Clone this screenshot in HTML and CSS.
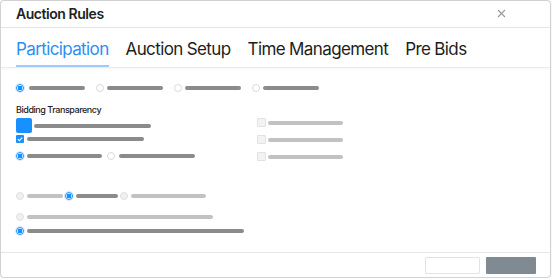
FILE: index.html
```html
<!DOCTYPE html>
<html>
<head>
<meta charset="utf-8">
<link rel="stylesheet" href="styles.css">
</head>
<body>
<div class="dialog">
  <div class="header">
    <span class="title">Auction Rules</span>
    <svg class="close" width="9" height="9" viewBox="0 0 9 9"><path d="M1 1L8 8M8 1L1 8" stroke="#9a9a9a" stroke-width="1.1" fill="none"/></svg>
  </div>
  <div class="tabs">
    <div class="tab active">Participation</div>
    <div class="tab">Auction Setup</div>
    <div class="tab">Time Management</div>
    <div class="tab">Pre Bids</div>
  </div>
  <div class="content">
    <div class="row r1">
      <span class="radio on first"></span><span class="bar dark" style="width:56px"></span>
      <span class="radio"></span><span class="bar dark" style="width:56px"></span>
      <span class="radio"></span><span class="bar dark" style="width:56px"></span>
      <span class="radio"></span><span class="bar dark" style="width:56px"></span>
    </div>
    <div class="label">Bidding Transparency</div>
    <div class="grid">
      <div class="col-left">
        <div class="row ra"><span class="square"></span><span class="bar dark" style="width:117px"></span></div>
        <div class="row rb"><span class="check on"><svg width="8" height="8" viewBox="0 0 8 8"><path d="M1.8 4.1L3.4 5.6L6.3 2.6" stroke="#fff" stroke-width="1.2" fill="none"/></svg></span><span class="bar dark" style="width:117px"></span></div>
        <div class="row rc">
          <span class="radio on"></span><span class="bar dark" style="width:75px"></span>
          <span class="radio sp"></span><span class="bar dark" style="width:76px"></span>
        </div>
      </div>
      <div class="col-right">
        <div class="row rr"><span class="check dis"></span><span class="bar light" style="width:75px"></span></div>
        <div class="row rr"><span class="check dis"></span><span class="bar light" style="width:75px"></span></div>
        <div class="row rr"><span class="check dis"></span><span class="bar light" style="width:75px"></span></div>
      </div>
    </div>
    <div class="row r3">
      <span class="radio dis"></span><span class="bar light" style="width:36px"></span>
      <span class="radio on"></span><span class="bar dark" style="width:42px"></span>
      <span class="radio dis"></span><span class="bar light" style="width:75px"></span>
    </div>
    <div class="row r4">
      <span class="radio dis"></span><span class="bar light" style="width:186px"></span>
    </div>
    <div class="row r5">
      <span class="radio on"></span><span class="bar dark" style="width:217px"></span>
    </div>
  </div>
  <div class="footer">
    <span class="btn cancel"></span>
    <span class="btn ok"></span>
  </div>
</div>
</body>
</html>
```

FILE: styles.css
```css
html, body {
  margin: 0;
  padding: 0;
  background: #fff;
}
body {
  font-family: Inter, "Noto Sans", sans-serif;
}
.dialog {
  width: 549px;
  height: 276px;
  border: 1px solid #d2d2d2;
  border-radius: 4px;
  box-shadow: 0 0 2px rgba(0,0,0,0.12);
  display: flex;
  flex-direction: column;
  background: #fff;
  overflow: hidden;
}
.header {
  height: 26px;
  border-bottom: 1px solid #e4e4e4;
  display: flex;
  align-items: center;
  justify-content: space-between;
  padding: 0 44px 0 15px;
  flex: none;
}
.title {
  font-size: 14px;
  font-weight: 600;
  line-height: 26px;
  color: #222;
  letter-spacing: -0.45px;
}
.close {
  margin-top: -1px;
}
.tabs {
  display: flex;
  gap: 17px;
  padding: 0 15px;
  border-bottom: 1px solid #ececec;
  box-shadow: 0 1px 2px rgba(0,0,0,0.04);
  flex: none;
}
.tab {
  font-size: 17px;
  letter-spacing: -0.62px;
  line-height: 22px;
  padding: 10px 0 5px;
  color: #1d1d1d;
  border-bottom: 2px solid transparent;
}
.tab.active {
  color: #2b8ef5;
  border-bottom-color: #9dcbfb;
}
.content {
  flex: 1;
  padding: 14px 15px 0;
}
.row {
  display: flex;
  align-items: center;
  height: 12px;
}
.r1 .radio { margin-right: 3px; }
.r1 .radio.first { margin-right: 5px; }
.r1 .bar { margin-right: 11px; }
.radio {
  width: 8px;
  height: 8px;
  border-radius: 50%;
  border: 1px solid #d9d9d9;
  box-sizing: border-box;
  background: #fff;
  flex: none;
}
.radio.on {
  border-color: #1890ff;
  background: radial-gradient(circle, #1890ff 0 2.2px, #fff 2.6px);
  box-shadow: 0 0 0 1px rgba(24,144,255,0.18);
}
.radio.dis {
  background: #f0f0f0;
  border-color: #e0e0e0;
}
.bar {
  display: block;
  height: 4px;
  border-radius: 2px;
  flex: none;
}
.bar.dark { background: #8b8b8b; }
.bar.light { background: #c2c2c2; }
.label {
  font-size: 9px;
  font-weight: 500;
  letter-spacing: -0.45px;
  line-height: 12px;
  color: #222;
  margin-top: 10px;
  margin-bottom: 2px;
}
.grid {
  display: grid;
  grid-template-columns: 241px auto;
}
.col-left {
  display: flex;
  flex-direction: column;
}
.ra { height: 15px; }
.square {
  width: 16px;
  height: 15px;
  border-radius: 2px;
  background: #1890ff;
  margin-right: 2px;
  flex: none;
}
.rb .check { margin-right: 3px; }
.check {
  width: 8px;
  height: 8px;
  border-radius: 1px;
  box-sizing: border-box;
  flex: none;
  display: flex;
}
.check.on { background: #1890ff; }
.check.dis {
  width: 9px;
  height: 9px;
  background: #f3f3f3;
  border: 1px solid #e2e2e2;
  margin-right: 2px;
}
.rc { margin-top: 5px; }
.rc .radio { margin-right: 3px; }
.rc .radio.sp { margin-left: 5px; margin-right: 4px; }
.col-right {
  display: flex;
  flex-direction: column;
  gap: 8px;
}
.rr { height: 9px; }
.r3 { margin-top: 28px; }
.r3 .radio { margin-right: 3px; }
.r3 .bar { margin-right: 2px; }
.r4 { margin-top: 9px; }
.r4 .radio, .r5 .radio { margin-right: 3px; }
.r5 { margin-top: 2px; }
.footer {
  flex: none;
  border-top: 1px solid #e6e6e6;
  display: flex;
  justify-content: flex-end;
  align-items: flex-start;
  gap: 6px;
  padding: 4px 14px 0 0;
  box-sizing: border-box;
  height: 25px;
}
.btn {
  display: block;
  height: 17px;
  box-sizing: border-box;
  border-radius: 1px;
}
.btn.cancel {
  width: 55px;
  border: 1px solid #e3e3e3;
  background: #fff;
}
.btn.ok {
  width: 50px;
  background: #808a93;
}
```
